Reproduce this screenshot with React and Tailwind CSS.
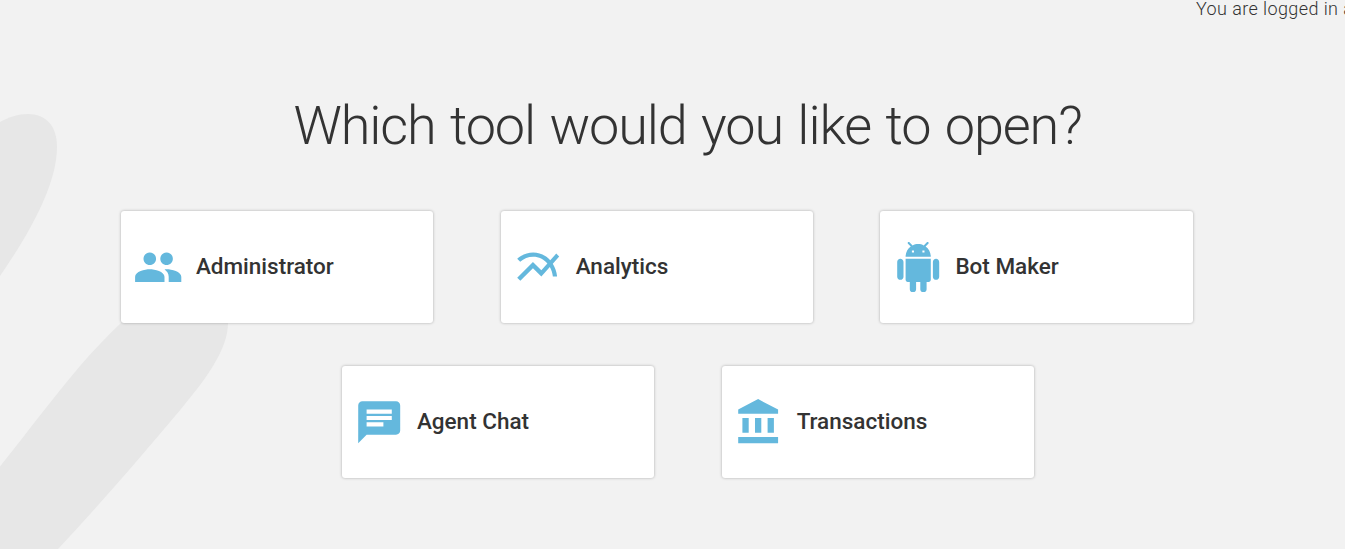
const ICONS = {
  people:
    "M16 11c1.66 0 2.99-1.34 2.99-3S17.66 5 16 5c-1.66 0-3 1.34-3 3s1.34 3 3 3zm-8 0c1.66 0 2.99-1.34 2.99-3S9.66 5 8 5C6.34 5 5 6.34 5 8s1.34 3 3 3zm0 2c-2.33 0-7 1.17-7 3.5V19h14v-2.5c0-2.33-4.67-3.5-7-3.5zm8 0c-.29 0-.62.02-.97.05 1.16.84 1.97 1.97 1.97 3.45V19h6v-2.5c0-2.33-4.67-3.5-7-3.5z",
  chart:
    "M22 6.92l-1.41-1.41-2.85 3.21C15.68 6.4 12.83 5 9.61 5 6.72 5 4.07 6.16 2 8l1.42 1.42C5.12 7.93 7.27 7 9.61 7c2.74 0 5.09 1.26 6.77 3.24l-2.88 3.24-4-4L2 16.99l1.5 1.5 6-6.01 4 4 4.05-4.55c.75 1.35 1.25 2.9 1.44 4.55H21c-.22-2.3-.95-4.39-2.04-6.14L22 6.92z",
  android:
    "M6 18c0 .55.45 1 1 1h1v3.5c0 .83.67 1.5 1.5 1.5s1.5-.67 1.5-1.5V19h2v3.5c0 .83.67 1.5 1.5 1.5s1.5-.67 1.5-1.5V19h1c.55 0 1-.45 1-1V8H6v10zM3.5 8C2.67 8 2 8.67 2 9.5v7c0 .83.67 1.5 1.5 1.5S5 17.33 5 16.5v-7C5 8.67 4.33 8 3.5 8zm17 0c-.83 0-1.5.67-1.5 1.5v7c0 .83.67 1.5 1.5 1.5s1.5-.67 1.5-1.5v-7c0-.83-.67-1.5-1.5-1.5zm-4.97-5.84l1.3-1.3c.2-.2.2-.51 0-.71-.2-.2-.51-.2-.71 0l-1.48 1.48C13.85 1.23 12.95 1 12 1c-.96 0-1.86.23-2.66.63L7.85.15c-.2-.2-.51-.2-.71 0-.2.2-.2.51 0 .71l1.31 1.31C6.97 3.26 6 5.01 6 7h12c0-1.99-.97-3.75-2.47-4.84zM10 5H9V4h1v1zm5 0h-1V4h1v1z",
  chat: "M20 2H4c-1.1 0-1.99.9-1.99 2L2 22l4-4h14c1.1 0 2-.9 2-2V4c0-1.1-.9-2-2-2zM6 9h12v2H6V9zm8 5H6v-2h8v2zm4-6H6V6h12v2z",
  bank: "M4 10v7h3v-7H4zm6 0v7h3v-7h-3zM2 22h19v-3H2v3zm14-12v7h3v-7h-3zm-4.5-9L2 6v2h19V6l-9.5-5z",
};

function ToolCard({ icon, label }) {
  return (
    <a className="flex h-28 w-[312.5px] shrink-0 items-center rounded-[3px] bg-white pl-[12.4px] shadow-[0_0_3px_rgba(0,0,0,0.3)]">
      <svg viewBox="0 0 24 24" className="size-[50.4px] shrink-0 fill-[#64b8dd]" aria-hidden="true">
        <path d={ICONS[icon]} />
      </svg>
      <span className="ml-[12.3px] pb-0.5 text-[22.5px] leading-7 font-medium whitespace-nowrap">{label}</span>
    </a>
  );
}

export default function App() {
  return (
    <div className="relative isolate h-[549px] w-full overflow-hidden bg-[#f2f2f2] font-['Roboto',sans-serif] text-[#333]">
      <svg viewBox="0 0 240 549" className="absolute top-0 left-0 -z-10 h-[549px] w-60 fill-[#e7e7e7]" aria-hidden="true">
        <path d="M0 122C9 117 18 114 28 114C46 114 57 126 57 147C57 187 26 238 0 276Z" />
        <path d="M0 466.5C29 430 53 398 80 366C94 350 107 336 121 323L150 300L220 300L228 323C228 350 205 380 181 409C139 459 101 503 58 549H0Z" />
      </svg>
      <header className="flex h-[18px] items-center pl-[1196px] text-lg leading-[18px] font-light tracking-[0.4px] whitespace-nowrap">
        You are logged in as
      </header>
      <main>
        <h1 className="mt-[76px] ml-[30px] text-center text-[54px] leading-16 font-light tracking-[-1.1px] whitespace-nowrap [word-spacing:2.3px]">
          Which tool would you like to open?
        </h1>
        <div className="mt-[53px] flex gap-[67.25px] pl-[120.8px]">
          <ToolCard icon="people" label="Administrator" />
          <ToolCard icon="chart" label="Analytics" />
          <ToolCard icon="android" label="Bot Maker" />
        </div>
        <div className="mt-[43px] flex gap-[67.25px] pl-[341.8px]">
          <ToolCard icon="chat" label="Agent Chat" />
          <ToolCard icon="bank" label="Transactions" />
        </div>
      </main>
    </div>
  );
}
